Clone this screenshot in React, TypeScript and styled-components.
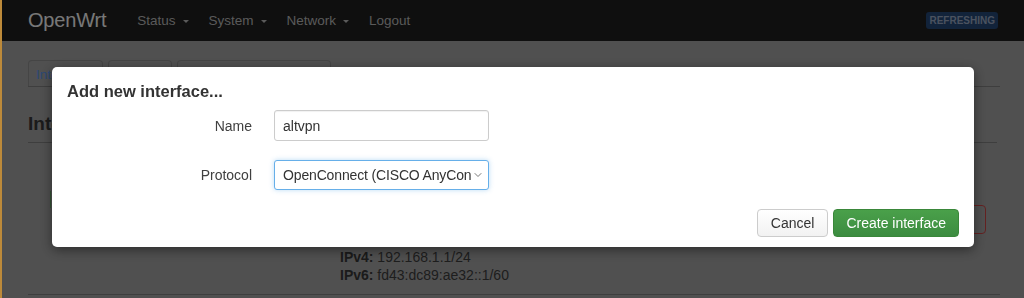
import React from "react";
import styled, { createGlobalStyle } from "styled-components";
import { ChevronDown } from "lucide-react";

const GlobalStyle = createGlobalStyle`
  html, body {
    margin: 0;
    padding: 0;
    height: 100%;
  }
  body {
    font-family: "Liberation Sans", Arial, Helvetica, sans-serif;
    font-size: 14px;
    color: #3c3c3c;
    background: #a0a0a0;
    overflow: hidden;
  }
  #root {
    height: 100%;
  }
`;

const Frame = styled.div`
  display: flex;
  height: 298px;
`;

const WindowEdge = styled.div`
  flex: none;
  width: 2px;
  background: #bd8a3a;
`;

const Page = styled.div`
  flex: 1;
  min-width: 0;
  display: flex;
  flex-direction: column;
`;

/* header */
const Navbar = styled.header`
  height: 41px;
  flex: none;
  display: flex;
  align-items: center;
  padding: 0 26px 0 26px;
  background: #1e1e1e;
`;

const Brand = styled.a`
  font-size: 20px;
  color: #f0f0f0;
  margin-right: 21px;
  letter-spacing: -0.2px;
`;

const NavItem = styled.a`
  display: flex;
  align-items: center;
  padding: 0 10px;
  font-size: 13.5px;
  color: #b4b4b4;
`;

const Caret = styled.span`
  width: 0;
  height: 0;
  margin-left: 7px;
  margin-top: 1px;
  border-left: 3px solid transparent;
  border-right: 3px solid transparent;
  border-top: 3px solid currentColor;
`;

const Spacer = styled.div`
  flex: 1;
`;

const Badge = styled.span`
  height: 17px;
  line-height: 17px;
  padding: 0 3px;
  border-radius: 3px;
  font-size: 10px;
  font-weight: bold;
  color: #96a4be;
  background: #244674;
`;

/* page body behind the dialog */
const Content = styled.main`
  padding: 19px 24px 0 26px;
`;

const Tabs = styled.ul`
  display: flex;
  gap: 5px;
  margin: 0;
  padding: 0;
  list-style: none;
  border-bottom: 1px solid #7c7c7c;
`;

const Tab = styled.li<{ $active?: boolean }>`
  height: 25px;
  line-height: 27px;
  padding: 0 7px;
  font-size: 13.5px;
  border: 1px solid #8a8a8a;
  border-bottom: none;
  border-radius: 4px 4px 0 0;
  color: ${(p) => (p.$active ? "#5890e6" : "#3c3c3c")};
  background: ${(p) => (p.$active ? "#a0a0a0" : "transparent")};
`;

const Heading = styled.h2`
  margin: 25px 3px 0 0;
  padding-bottom: 6px;
  font-size: 19px;
  line-height: 24px;
  color: #363636;
  border-bottom: 1px solid #7c7c7c;
`;

const IfaceRow = styled.div`
  height: 151px;
  box-sizing: border-box;
  display: grid;
  grid-template-columns: 312px 1fr auto;
  border-bottom: 1px solid #7c7c7c;
  margin-top: 1px;
`;

const IfaceName = styled.div`
  padding: 47px 0 0 22px;
`;

const DeviceBadge = styled.div`
  width: 64px;
  height: 17px;
  border-left: 1px solid #6aa86a;
  background: #a0a8a0;
`;

const Status = styled.div`
  align-self: end;
  padding-bottom: 10px;
  line-height: 18px;
  color: #3c3c3c;

  b {
    color: #363636;
  }
`;

const Actions = styled.div`
  align-self: center;
  display: flex;
  gap: 5px;
  padding-right: 14px;
`;

const DeleteButton = styled.span`
  width: 62px;
  height: 29px;
  box-sizing: border-box;
  border-radius: 4px;
  border: 1px solid #c84444;
`;

/* dialog */
const Backdrop = styled.div`
  position: fixed;
  top: 0;
  left: 2px;
  right: 0;
  bottom: 0;
  background: rgba(0, 0, 0, 0.5);
  padding: 67px 0 0 50px;
`;

const Modal = styled.div`
  width: 922px;
  box-sizing: border-box;
  padding: 14px 15px 10px;
  background: #fff;
  border-radius: 5px;
  box-shadow: 0 3px 12px rgba(0, 0, 0, 0.45);
`;

const Title = styled.h4`
  margin: 0 0 9px;
  font-size: 16.5px;
  line-height: 20px;
  font-weight: bold;
  color: #333;
`;

const Form = styled.div`
  display: flex;
  flex-direction: column;
  gap: 19px;
`;

const FieldRow = styled.label`
  display: grid;
  grid-template-columns: 185px 215px;
  column-gap: 22px;
  align-items: center;
`;

const FieldLabel = styled.span`
  text-align: right;
  color: #404040;
`;

const TextInput = styled.input`
  height: 31px;
  box-sizing: border-box;
  padding: 0 8px;
  border: 1px solid #ccc;
  border-radius: 3px;
  font: 14px "Liberation Sans", Arial, sans-serif;
  color: #333;
  box-shadow: inset 0 1px 1px rgba(0, 0, 0, 0.06);
  outline: none;
`;

const SelectWrap = styled.div`
  position: relative;
  height: 30px;
`;

const Select = styled.select`
  appearance: none;
  width: 100%;
  height: 30px;
  box-sizing: border-box;
  padding: 0 16px 0 8px;
  border: 1px solid #66afe9;
  border-radius: 3px;
  background: #fff;
  font: 14px "Liberation Sans", Arial, sans-serif;
  letter-spacing: -0.15px;
  color: #333;
  box-shadow: 0 0 5px rgba(102, 175, 233, 0.45);
  outline: none;
`;

const SelectChevron = styled(ChevronDown)`
  position: absolute;
  right: 5px;
  top: 9px;
  color: #555;
  pointer-events: none;
`;

const Footer = styled.div`
  display: flex;
  justify-content: flex-end;
  gap: 5px;
  margin-top: 19px;
`;

const Button = styled.button<{ $primary?: boolean; $pad: number }>`
  height: 28px;
  box-sizing: border-box;
  padding: 0 ${(p) => p.$pad}px;
  border-radius: 4px;
  font: 14px "Liberation Sans", Arial, sans-serif;
  cursor: pointer;
  color: ${(p) => (p.$primary ? "#fff" : "#333")};
  border: 1px solid ${(p) => (p.$primary ? "#3a873a" : "#ccc")};
  background: ${(p) =>
    p.$primary
      ? "linear-gradient(#4aa04a, #3c8c40)"
      : "linear-gradient(#fff, #f2f2f2)"};
`;

export default function App() {
  return (
    <>
      <GlobalStyle />
      <Frame>
        <WindowEdge />
        <Page>
          <Navbar>
            <Brand>OpenWrt</Brand>
            <NavItem>
              Status
              <Caret />
            </NavItem>
            <NavItem>
              System
              <Caret />
            </NavItem>
            <NavItem>
              Network
              <Caret />
            </NavItem>
            <NavItem>Logout</NavItem>
            <Spacer />
            <Badge>REFRESHING</Badge>
          </Navbar>
          <Content>
            <Tabs>
              <Tab $active>Interfaces</Tab>
              <Tab>Devices</Tab>
              <Tab>Global network options</Tab>
            </Tabs>
            <Heading>Interfaces</Heading>
            <IfaceRow>
              <IfaceName>
                <DeviceBadge />
              </IfaceName>
              <Status>
                <div>
                  <b>Protocol:</b> Static address
                </div>
                <div>
                  <b>Uptime:</b> 0h 41m 12s
                </div>
                <div>
                  <b>MAC:</b> 52:54:00:12:34:56
                </div>
                <div>
                  <b>RX:</b> 1.21 MB (9870 Pkts.)
                </div>
                <div>
                  <b>TX:</b> 3.04 MB (6112 Pkts.)
                </div>
                <div>
                  <b>IPv4:</b> 192.168.1.1/24
                </div>
                <div>
                  <b>IPv6:</b> fd43:dc89:ae32::1/60
                </div>
              </Status>
              <Actions>
                <DeleteButton title="Delete" />
              </Actions>
            </IfaceRow>
          </Content>
        </Page>
      </Frame>

      <Backdrop>
        <Modal>
          <Title>Add new interface...</Title>
          <Form>
            <FieldRow>
              <FieldLabel>Name</FieldLabel>
              <TextInput defaultValue="altvpn" />
            </FieldRow>
            <FieldRow>
              <FieldLabel>Protocol</FieldLabel>
              <SelectWrap>
                <Select defaultValue="openconnect">
                  <option value="static">Static address</option>
                  <option value="dhcp">DHCP client</option>
                  <option value="openconnect">
                    OpenConnect (CISCO AnyConnect)
                  </option>
                </Select>
                <SelectChevron size={12} strokeWidth={1.6} />
              </SelectWrap>
            </FieldRow>
          </Form>
          <Footer>
            <Button $pad={13}>Cancel</Button>
            <Button $primary $pad={12}>
              Create interface
            </Button>
          </Footer>
        </Modal>
      </Backdrop>
    </>
  );
}
